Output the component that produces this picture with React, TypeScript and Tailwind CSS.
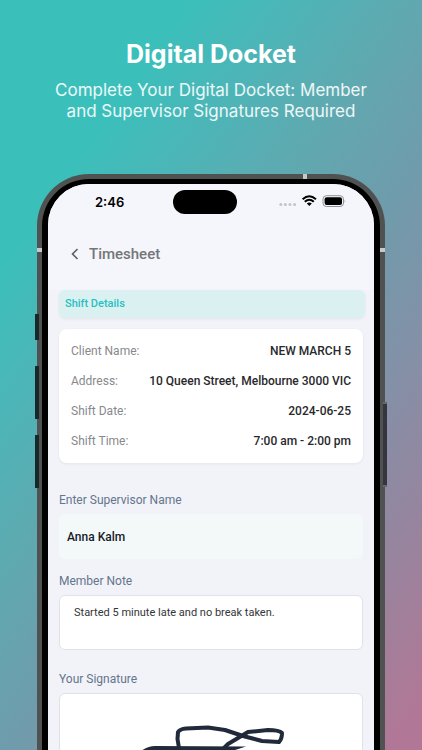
import React from "react";

const details = [
  { label: "Client Name:", value: "NEW MARCH 5" },
  { label: "Address:", value: "10 Queen Street, Melbourne 3000 VIC" },
  { label: "Shift Date:", value: "2024-06-25" },
  { label: "Shift Time:", value: "7:00 am - 2:00 pm" },
];

function StatusBar() {
  return (
    <div className="flex h-[35px] items-center pr-[27px] pl-[47px]">
      <span className="w-[78px] font-['Inter',sans-serif] text-[13px] leading-4 font-semibold text-black">2:46</span>
      <div className="h-6 w-16 rounded-full bg-black" />
      <svg className="ml-auto" width="70" height="14" viewBox="0 0 70 14" aria-hidden="true">
        <g fill="#c3c4c9">
          <circle cx="3.8" cy="9.5" r="1.5" />
          <circle cx="8.4" cy="9.5" r="1.5" />
          <circle cx="13" cy="9.5" r="1.5" />
          <circle cx="17.6" cy="9.5" r="1.5" />
        </g>
        <g fill="none" stroke="#000" strokeWidth="2">
          <path d="M25.6 4.2Q32.2 -1.6 39 4.2" />
          <path d="M27.8 6.8Q32.3 2.8 36.8 6.8" />
        </g>
        <path d="M29.8 8.4Q32.3 6.4 34.8 8.4L32.3 11Z" />
        <rect x="46" y="0.7" width="20.5" height="10.8" rx="3.4" fill="none" stroke="#909196" />
        <rect x="47.6" y="2.2" width="17.4" height="7.8" rx="2" />
        <path d="M67.7 4.4Q69 6 67.7 7.8Z" fill="#909196" />
      </svg>
    </div>
  );
}

export default function App() {
  return (
    <main className="flex h-screen flex-col overflow-hidden bg-[linear-gradient(125deg,#3bbfbb_0%,#3bbfbb_20%,#50b3b6_33%,#62a7af_45%,#6f9cac_56%,#868fa6_71%,#98849e_83%,#b07896_96%)] font-['Roboto',sans-serif]">
      <header className="flex flex-col items-center gap-2 px-10 pt-9 text-center font-['Inter',sans-serif] text-white">
        <h1 className="text-[25px] leading-9 font-bold">Digital Docket</h1>
        <p className="text-[17px] leading-[21px] font-normal text-white/90">
          Complete Your Digital Docket: Member
          <br />
          and Supervisor Signatures Required
        </p>
      </header>

      <div className="relative mx-[37px] mt-[52px] min-h-0 flex-1">
        <i className="absolute top-[140px] -left-0.5 h-[26px] w-1 bg-[#17282b]" />
        <i className="absolute top-[192px] -left-0.5 h-[53px] w-1 bg-[#17282b]" />
        <i className="absolute top-[261px] -left-0.5 h-[53px] w-1 bg-[#17282b]" />
        <i className="absolute top-[228px] -right-0.5 h-[85px] w-1 border-y-2 border-[#646971] bg-[#35353d]" />
        <div className="h-full rounded-t-[52px] bg-[#505151] px-[5px] pt-[5px]">
          <div className="h-full rounded-t-[47px] bg-black px-[6px] pt-[5px]">
            <div className="h-full overflow-hidden rounded-t-[41px] bg-[#f1f3f8]">
              <div className="bg-[#f5f6fb] pb-6">
                <StatusBar />
                <div className="mt-[23px] flex h-6 items-center gap-2 pl-[21px]">
                  <button type="button" aria-label="Back" className="flex w-3 justify-center text-[#5e5f63]">
                    <svg width="8" height="12" viewBox="0 0 8 12" fill="none" stroke="currentColor" strokeWidth="1.6">
                      <path d="M6.5 1L1.5 6L6.5 11" />
                    </svg>
                  </button>
                  <h2 className="text-[15px] font-medium text-[#747579]">Timesheet</h2>
                </div>
              </div>

              <div className="px-[11px]">
                <h3 className="-mr-0.5 h-7 rounded-md bg-[#dbf1f1] px-1.5 text-[11px] leading-7 font-medium text-[#26c0c1] shadow-[0_1px_3px_rgba(0,0,0,0.06)]">
                  Shift Details
                </h3>

                <dl className="mt-[11px] flex h-[134px] flex-col justify-center gap-3 rounded-lg bg-white px-3 text-xs leading-[18px] shadow-[0_1px_3px_rgba(0,0,0,0.06)]">
                  {details.map((d) => (
                    <div key={d.label} className="flex justify-between">
                      <dt className="text-[#88898c]">{d.label}</dt>
                      <dd className="font-medium text-[#28292c]">{d.value}</dd>
                    </div>
                  ))}
                </dl>

                <label htmlFor="supervisor" className="mt-7 block text-xs leading-[18px] text-[#65758d]">
                  Enter Supervisor Name
                </label>
                <input
                  id="supervisor"
                  defaultValue="Anna Kalm"
                  className="mt-[5px] block h-[45px] w-full rounded-md bg-[#f3f9f9] px-2 text-xs font-medium text-[#171b2a]"
                />

                <label htmlFor="note" className="mt-[13px] block text-xs leading-[18px] text-[#65758d]">
                  Member Note
                </label>
                <textarea
                  id="note"
                  defaultValue="Started 5 minute late and no break taken."
                  className="mt-[5px] block h-[55px] w-full resize-none rounded-md border border-[#e0e2e7] bg-white px-3.5 py-2 text-[11px] leading-[18px] text-[#343538]"
                />

                <h3 className="mt-[20px] text-xs leading-[18px] text-[#65758d]">Your Signature</h3>
                <div className="mt-[5px] flex h-40 justify-center rounded-md border border-[#e0e2e7] bg-white">
                  <svg width="170" height="70" viewBox="126 694 170 70" role="img" aria-label="Signature" fill="none" stroke="#202a3a" strokeWidth="4" strokeLinejoin="round">
                    <path d="M179 748L177.500 739L178 732Q180 729 186 728.500L208 727.500L225 730L243 736L262 741L279 742Q282 739 282 733Q279 730 268 730L248 732L238 738L228 744L220 752" />
                    <path d="M141 751Q148 746 155 746L246 746.500L232 751V764H141Z" fill="#202a3a" stroke="none" />
                  </svg>
                </div>
              </div>
            </div>
          </div>
        </div>
        <i className="absolute top-0 right-[78px] h-[5px] w-1 bg-[#c5c9cb]" />
        <i className="absolute top-[74px] left-0 h-1 w-[5px] bg-[#c5c9cb]" />
        <i className="absolute top-[74px] right-0 h-1 w-[5px] bg-[#c5c9cb]" />
      </div>
    </main>
  );
}
